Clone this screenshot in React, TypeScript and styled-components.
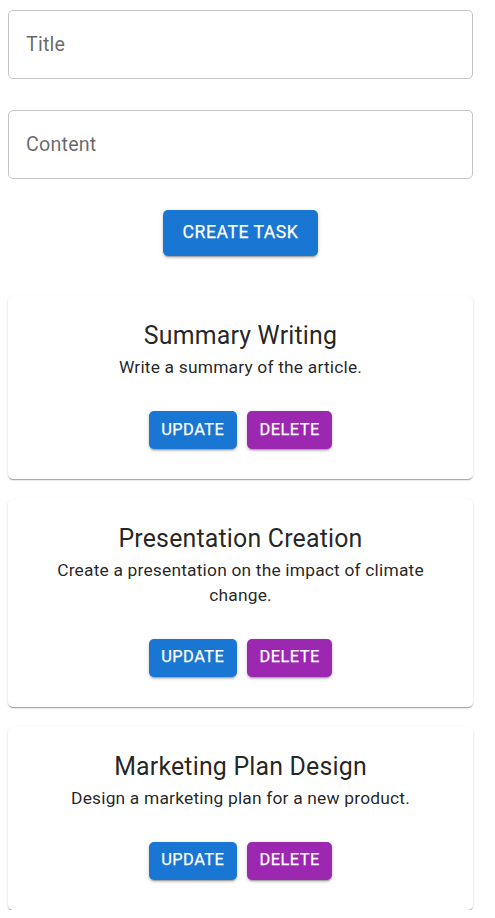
import React from "react";
import styled, { createGlobalStyle } from "styled-components";

const Global = createGlobalStyle`
  html, body { margin: 0; padding: 0; background: #ffffff; }
  body { font-family: Roboto, "Noto Sans", Arial, sans-serif; }
  * { box-sizing: border-box; }
`;

const Page = styled.div`
  width: 465px;
  margin-left: 8px;
  padding-top: 10px;
  display: flex;
  flex-direction: column;
`;

const Field = styled.div`
  height: 69px;
  border: 1px solid #c4c4c4;
  border-radius: 5px;
  display: flex;
  align-items: center;
  padding: 0 17px;
  margin-bottom: 31px;
`;

const FieldLabel = styled.span`
  font-family: Roboto, Arial, sans-serif;
  font-size: 19.7px;
  color: rgba(0, 0, 0, 0.6);
  letter-spacing: 0.01em;
`;

const Center = styled.div`
  display: flex;
  justify-content: center;
`;

const Button = styled.button<{ $tone: "primary" | "secondary"; $size: "medium" | "small" }>`
  border: none;
  border-radius: 5px;
  font-family: Roboto, Arial, sans-serif;
  font-weight: 400;
  -webkit-text-stroke: 0.25px #ffffff;
  text-transform: uppercase;
  letter-spacing: 0.03em;
  color: #ffffff;
  background: ${(p) => (p.$tone === "primary" ? "#1976d2" : "#9c27b0")};
  box-shadow: 0px 3px 1px -2px rgba(0, 0, 0, 0.2), 0px 2px 2px 0px rgba(0, 0, 0, 0.14),
    0px 1px 5px 0px rgba(0, 0, 0, 0.12);
  height: ${(p) => (p.$size === "medium" ? "46px" : "38px")};
  padding: ${(p) => (p.$size === "medium" ? "0 20px" : "0 12.5px")};
  font-size: ${(p) => (p.$size === "medium" ? "17.6px" : "16.4px")};
  line-height: 1;
  cursor: pointer;
`;

const List = styled.div`
  margin-top: 40px;
  display: flex;
  flex-direction: column;
  gap: 20px;
`;

const Card = styled.div`
  background: #ffffff;
  border-radius: 5px;
  box-shadow: 0px 2px 1px -1px rgba(0, 0, 0, 0.2), 0px 1px 1px 0px rgba(0, 0, 0, 0.14),
    0px 1px 3px 0px rgba(0, 0, 0, 0.12);
  padding: 20px 20px 30px;
  display: flex;
  flex-direction: column;
  align-items: center;
  text-align: center;
`;

const CardTitle = styled.div`
  font-size: 24.9px;
  line-height: 39.4px;
  font-weight: 400;
  color: rgba(0, 0, 0, 0.87);
  letter-spacing: 0.0075em;
`;

const CardText = styled.div`
  font-size: 17.4px;
  line-height: 24.6px;
  color: rgba(0, 0, 0, 0.87);
  letter-spacing: 0.01071em;
  max-width: 400px;
`;

const Actions = styled.div`
  margin-top: 31px;
  display: flex;
  gap: 10px;
`;

const tasks = [
  { title: "Summary Writing", content: "Write a summary of the article." },
  { title: "Presentation Creation", content: "Create a presentation on the impact of climate change." },
  { title: "Marketing Plan Design", content: "Design a marketing plan for a new product." },
];

export default function App() {
  return (
    <>
      <Global />
      <Page>
        <Field>
          <FieldLabel>Title</FieldLabel>
        </Field>
        <Field>
          <FieldLabel>Content</FieldLabel>
        </Field>
        <Center>
          <Button $tone="primary" $size="medium">Create Task</Button>
        </Center>
        <List>
          {tasks.map((t) => (
            <Card key={t.title}>
              <CardTitle>{t.title}</CardTitle>
              <CardText>{t.content}</CardText>
              <Actions>
                <Button $tone="primary" $size="small">Update</Button>
                <Button $tone="secondary" $size="small">Delete</Button>
              </Actions>
            </Card>
          ))}
        </List>
      </Page>
    </>
  );
}
